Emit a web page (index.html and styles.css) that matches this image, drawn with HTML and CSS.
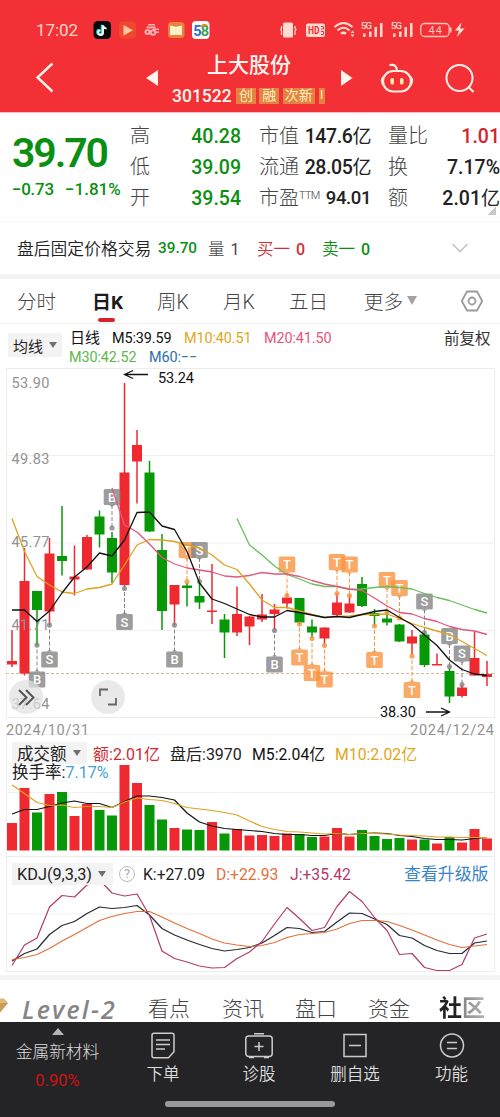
FILE: index.html
```html
<!DOCTYPE html>
<html lang="zh-CN">
<head>
<meta charset="utf-8">
<title>上大股份 301522</title>
<link rel="stylesheet" href="styles.css">
</head>
<body>
<div class="app">
  <header class="header">
    <div class="status">
      <span class="clock">17:02</span>
      <svg class="apps" width="118" height="20" viewBox="0 0 118 20">
        <rect x="0.5" y="1" width="17.5" height="18" rx="4.5" fill="#080808"/>
        <path d="M9.5 5v7.3a2.3 2.3 0 1 1-2.3-2.3M9.5 5c.3 2 1.5 3 3.6 3.2" transform="translate(-.7 -.2)" fill="none" stroke="#27e6e2" stroke-width="2"/>
        <path d="M9.5 5v7.3a2.3 2.3 0 1 1-2.3-2.3M9.5 5c.3 2 1.5 3 3.6 3.2" transform="translate(.5 .4)" fill="none" stroke="#fff" stroke-width="1.9"/>
        <rect x="26" y="1.500" width="17" height="17" rx="4" fill="#f0482c"/>
        <path d="M30.500 5v10.500l9.500-5.300z" fill="#ffc6a0"/>
        <g fill="#ffb3b3"><rect x="55" y="4" width="7" height="1.500"/><rect x="53.500" y="6.500" width="9" height="1.800"/><circle cx="54.500" cy="12" r="3"/><circle cx="60" cy="12.500" r="3.300"/><rect x="60" y="8.500" width="6" height="1.500"/><rect x="62" y="11.500" width="4" height="1.500"/></g>
        <g fill="#f23036"><circle cx="54.500" cy="12" r="1"/><circle cx="60" cy="12.500" r="1.200"/></g>
        <rect x="75" y="2" width="16.500" height="16" rx="3.500" fill="#e8823e"/>
        <path d="M77 5.500l6 1.200 6-1.200v9.800l-6-.6-6 .6z" fill="#fff2c8"/>
        <rect x="99" y="1" width="17.500" height="18" rx="4" fill="#fff"/>
        <text x="100.300" y="15.500" class="logo58" fill="#2f6fce">5</text>
        <text x="107.800" y="15.500" class="logo58" fill="#39a44c">8</text>
        <path d="M108.500 7a3 3 0 0 1 5.500-1" fill="none" stroke="#f08a24" stroke-width="1.800"/>
      </svg>
      <svg class="signals" width="188" height="20" viewBox="280 20 188 20">
        <g fill="#ffdcd0"><rect x="283" y="22.500" width="10" height="15" rx="1.500"/></g>
        <path d="M281.500 26v2.500l-1 1 1 1.500v4M295 26v2.500l1 1-1 1.500v4" fill="none" stroke="#ffdcd0" stroke-width="1.200"/>
        <rect x="306" y="23.500" width="19" height="13.500" rx="2" fill="#ffdcd0"/>
        <text x="308" y="34" class="hd" textLength="11.500" lengthAdjust="spacingAndGlyphs">HD</text>
        <path d="M321 26.500h2.500v2.500h-2.500M321 31.500h2.500v3h-2.500" fill="none" stroke="#f23036"/>
        <g fill="none" stroke="#ffdcd0" stroke-width="2"><path d="M334.500 27q9-8 18 0M337.500 30.500q6-5.500 12 0"/><path d="M341 33.800q2.500-2 5 0" stroke-width="2.500"/></g>
        <path d="M350.500 33l2-2.500 2 2.500zM350.500 34.500l2 2.500 2-2.500z" fill="#ffdcd0"/>
        <g fill="#ffdcd0"><text x="361" y="29" class="g5" textLength="11">5G</text><rect x="363" y="33.500" width="2.500" height="3.500"/><rect x="369" y="31.500" width="2.500" height="5.500"/><rect x="374.500" y="27" width="2.500" height="10"/><rect x="380" y="23" width="2.500" height="14"/></g>
        <g fill="#ffdcd0" transform="translate(30 0)"><text x="361" y="29" class="g5" textLength="11">5G</text><rect x="363" y="33.500" width="2.500" height="3.500"/><rect x="369" y="31.500" width="2.500" height="5.500"/><rect x="374.500" y="27" width="2.500" height="10"/><rect x="380" y="23" width="2.500" height="14"/></g>
        <rect x="420.700" y="23.500" width="28.500" height="13" rx="4" fill="none" stroke="#ffc4bb" stroke-width="1.300"/><rect x="450" y="27.500" width="1.500" height="5" fill="#ffc4bb"/>
        <text x="428.500" y="34" class="bat" textLength="13.500">44</text>
        <path d="M461.500 22.500l-6.500 8h4l-2 6.500 7.500-8.500h-4.500z" fill="#ffe3da"/>
      </svg>
    </div>
    <div class="nav">
      <svg class="back" width="20" height="32" viewBox="0 0 20 32"><path d="M17.500 2.500L2.500 16.500l15 14" fill="none" stroke="#fff3ea" stroke-width="2.400"/></svg>
      <svg class="prev" width="12" height="18" viewBox="0 0 12 18"><path d="M12 1v16L0 9z" fill="#fff5ee"/></svg>
      <div class="title">
        <div class="name">上大股份</div>
        <div class="codeline"><span class="code">301522</span><span class="tag">创</span><span class="tag">融</span><span class="tag wide">次新</span><span class="tag cut">I</span></div>
      </div>
      <svg class="next" width="12" height="18" viewBox="0 0 12 18"><path d="M0 1v16l11.500-8z" fill="#fff5ee"/></svg>
      <svg class="robot" width="34" height="32" viewBox="0 0 34 32" fill="none" stroke="#fff0df" stroke-width="2.200"><rect x="3" y="9" width="28" height="20.500" rx="10.200"/><path d="M3.500 15q-3 4 0 8M30.500 15q3 4 0 8M9.500 3.200q7-2 7.500 5.500"/><g fill="#fff0b0" stroke="none"><rect x="10.500" y="16" width="3.500" height="6.500" rx="1.600"/><rect x="20" y="16" width="3.500" height="6.500" rx="1.600"/></g></svg>
      <svg class="search" width="32" height="32" viewBox="0 0 32 32" fill="none" stroke="#fff0ea" stroke-width="2"><circle cx="14.500" cy="15" r="13"/><path d="M23.500 24l5 5"/></svg>
    </div>
  </header>

  <section class="quote">
    <div class="price">
      <div class="last">39.70</div>
      <div class="chg"><span class="abs">−0.73</span><span class="pct">−1.81%</span></div>
    </div>
    <dl class="grid g1"><dt>高</dt><dd>40.28</dd><dt>低</dt><dd>39.09</dd><dt>开</dt><dd>39.54</dd></dl>
    <dl class="grid g2"><dt>市值</dt><dd>147.6<i>亿</i></dd><dt>流通</dt><dd>28.05<i>亿</i></dd><dt>市盈<sup>TTM</sup></dt><dd class="pe">94.01</dd></dl>
    <dl class="grid g3"><dt>量比</dt><dd class="red">1.01</dd><dt>换</dt><dd>7.17%</dd><dt>额</dt><dd>2.01<i>亿</i></dd></dl>
    <span class="corner"></span>
  </section>

  <section class="after">
    <span class="after-name">盘后固定价格交易</span><span class="after-price">39.70</span><span class="after-vol">量 <b>1</b></span><span class="buy">买一 <b>0</b></span><span class="sell">卖一 <b>0</b></span>
    <svg class="chev" width="18" height="12" viewBox="0 0 18 12"><path d="M1.500 2L9 9.500 16.500 2" fill="none" stroke="#c4c4c4" stroke-width="1.600"/></svg>
  </section>

  <div class="band"></div>

  <nav class="tabs">
    <span>分时</span><span class="on">日K</span><span>周K</span><span>月K</span><span>五日</span><span class="more">更多<i class="tri"></i></span>
    <svg width="24" height="24" viewBox="0 0 24 24" fill="none" stroke="#9a9a9a" stroke-width="1.800"><path d="M7 2.500h10L22.200 12 17 21.500H7L1.800 12z" stroke-linejoin="round"/><circle cx="12" cy="12" r="3.500"/></svg>
  </nav>

  <section class="ma">
    <div class="select ma-select">均线<i class="tri"></i></div>
    <div class="ma-values">
      <div class="line1"><span class="w30">日线</span><span class="w60">M5:39.59</span><span class="w68 yellow">M10:40.51</span><span class="pink">M20:41.50</span></div>
      <div class="line2"><span class="w68 lime">M30:42.52</span><span class="blue">M60:−−</span></div>
    </div>
    <span class="adjust">前复权</span>
  </section>

  <section class="panel kline">
    <svg id="kline" width="500" height="367" viewBox="0 368 500 367"></svg>
    <button class="round expand" aria-label="展开"><svg width="34" height="34" viewBox="0 0 34 34" fill="none" stroke="#555" stroke-width="2"><path d="M10 10l7.500 7.500L10 25M17 10l7.500 7.500L17 25"/></svg></button>
    <button class="round full" aria-label="全屏"><svg width="34" height="34" viewBox="0 0 34 34" fill="none" stroke="#666" stroke-width="1.800"><path d="M9 16V9.500h8M25 18v6.500h-8"/></svg></button>
  </section>

  <section class="panel volume">
    <svg id="volume" width="500" height="121" viewBox="0 735 500 121"></svg>
    <div class="legend">
      <span class="select vol-select">成交额<i class="tri"></i></span><span class="amount">额:2.01亿</span><span class="post">盘后:3970</span><span class="v5">M5:2.04亿</span><span class="v10">M10:2.02亿</span>
    </div>
    <div class="turnover">换手率:<span>7.17%</span></div>
  </section>

  <section class="panel kdj">
    <svg id="kdj" width="500" height="119" viewBox="0 856 500 119"></svg>
    <div class="legend">
      <span class="select kdj-select">KDJ(9,3,3)<i class="tri"></i></span><span class="help">?</span><span class="k">K:+27.09</span><span class="d">D:+22.93</span><span class="j">J:+35.42</span><span class="upgrade">查看升级版</span>
    </div>
  </section>

  <div class="band thin"></div>

  <nav class="subtabs">
    <svg class="gem" width="8" height="18" viewBox="0 0 8 18"><path d="M0 1.500h4L8 6 0 16z" fill="#dcb87a"/><path d="M0 6h8L0 15z" fill="#c99c58"/></svg>
    <span class="level">Level-2</span><span>看点</span><span>资讯</span><span>盘口</span><span>资金</span><span class="community">社区</span>
  </nav>

  <footer class="bottom">
    <div class="sector"><i class="up"></i><span>金属新材料</span><b>0.90%</b></div>
    <div class="item"><svg width="28" height="28" viewBox="0 0 28 28"><path d="M5 1.800h18q2 0 2 2v16.500l-5.500 6H5q-2 0-2-2V3.800q0-2 2-2zM7 8.500h14M7 13h14M7 17.500h9" transform="translate(0 -.5)"/></svg><span>下单</span></div>
    <div class="item"><svg width="30" height="28" viewBox="0 0 30 28"><rect x="1.800" y="4" width="26.400" height="20.500" rx="3"/><path d="M10 1.700h10M5 25.500h5M20 25.500h5M15 10v9M10.500 14.500h9"/></svg><span>诊股</span></div>
    <div class="item"><svg width="28" height="28" viewBox="0 0 28 28"><path d="M3 2.500h22v22H3zM8 13.500h12"/></svg><span>删自选</span></div>
    <div class="item"><svg width="28" height="28" viewBox="0 0 28 28"><circle cx="14" cy="13.500" r="11.500"/><path d="M9 10.500h10M9 16.500h10"/></svg><span>功能</span></div>
    <span class="home"></span>
  </footer>
</div>
<script src="charts.js"></script>
</body>
</html>
```
FILE: styles.css
```css
* { box-sizing: border-box; }
body { margin: 0; background: #fff; color: #222; font-family: Roboto, "Noto Sans CJK SC", sans-serif; }
i { font-style: normal; }
b { font-weight: 500; }
svg { display: block; flex: none; }
.app { width: 500px; height: 1117px; overflow: hidden; display: flex; flex-direction: column; }
.app > * { flex: none; }
span { white-space: nowrap; }

/* header */
.header { height: 113px; background: #f23036; color: #fff6ef; border-bottom: 1px solid #fbb; }
.status { height: 50px; padding: 10px 0 0 36px; display: flex; align-items: center; }
.clock { width: 57px; font-size: 17px; color: #ffd5cb; letter-spacing: -.1px; }
.signals { margin-left: 69px; }
.logo58 { font: 700 14.500px Roboto, sans-serif; }
.hd { font: 700 10.500px Roboto, sans-serif; fill: #f23036; }
.g5 { font: 500 9.500px Roboto, sans-serif; }
.bat { font: 400 11px Roboto, sans-serif; fill: #ffc4bb; }
.nav { height: 62px; padding-left: 35px; display: flex; align-items: center; }
.back { margin-top: -8px; }
.prev { margin: -7px 0 0 91px; }
.title { width: 156px; margin: 0 13px 0 14px; }
.name { height: 29px; line-height: 25px; padding-left: 35px; font-size: 21px; font-weight: 500; }
.codeline { height: 28px; display: flex; align-items: center; }
.code { width: 65px; font-size: 17.500px; font-weight: 500; }
.tag { width: 20px; height: 16px; margin-right: 3.500px; background: #e4823f; color: #fff0c0; font-size: 14px; line-height: 15px; text-align: center; }
.tag.wide { width: 33px; }
.tag.cut { width: 6px; overflow: hidden; font-size: 12px; }
.next { margin-top: -7px; }
.robot { margin: -6px 0 0 27px; }
.search { margin: -5px 0 0 31px; }

/* quote */
.quote { height: 109px; padding: 8px 0 0 12px; display: flex; position: relative; border-bottom: 1px solid #f6f6f6; }
.price { width: 118px; color: #0b8f12; }
.last { height: 57px; line-height: 64px; font-size: 41px; font-weight: 600; letter-spacing: -2.100px; }
.chg { height: 24px; line-height: 22px; font-size: 17px; font-weight: 500; display: flex; }
.abs { width: 53px; letter-spacing: -.3px; }
.grid { margin: 0; display: grid; grid-template-columns: 40px 1fr; grid-auto-rows: 31px; line-height: 31px; font-size: 19.500px; }
.grid dt { font-size: 20px; font-weight: 300; color: #444; white-space: nowrap; }
.grid dd { margin: 0; text-align: right; font-weight: 500; white-space: nowrap; }
.grid i { font-size: 19px; font-weight: 400; }
.grid sup { font-size: 11px; line-height: 0; vertical-align: 6px; letter-spacing: -.7px; }
.g1 { width: 111px; color: #0b8f12; }
.g2 { width: 112px; margin-left: 18px; }
.g2 dd { letter-spacing: -.4px; }
.g2 .pe { font-size: 18.500px; }
.g3 { width: 112px; margin-left: 17px; }
.grid .red { color: #d8232a; }
.corner { position: absolute; right: 4px; bottom: 6px; width: 8px; height: 8px; background: linear-gradient(135deg, transparent 50%, #c8c8c8 50%); }

/* after-hours trading */
.after { height: 52px; padding: 0 0 1px 17px; display: flex; align-items: center; font-size: 16.500px; }
.after-name { width: 141px; font-size: 16.800px; font-weight: 350; }
.after-price { width: 50px; font-size: 15.300px; font-weight: 500; color: #0b8f12; }
.after-vol { width: 49px; font-weight: 300; color: #444; }
.after b { margin-left: 2px; font-size: 16px; }
.after-vol b { font-weight: 400; }
.buy { width: 65px; color: #cf3035; font-weight: 350; }
.sell { width: 129px; color: #0b8f12; font-weight: 350; }

.band { height: 5px; background: #f3f3f3; }
.band.thin { background: #f4f4f4; }

/* period tabs */
.tabs { height: 45px; padding: 0 0 1px 17px; display: grid; grid-template-columns: 75px 65px 66px 66px 75px 96px 24px; align-items: center; border-bottom: 1px solid #f3f3f3; font-size: 19.500px; font-weight: 300; color: #444; }
.tabs .on { position: relative; font-weight: 700; font-size: 19px; color: #1b1b1b; }
.on::after { content: ""; position: absolute; left: 6px; bottom: -8px; width: 17px; height: 4px; border-radius: 2px; background: #dc2228; }
.more { display: flex; align-items: center; gap: 4px; }
.tri { display: inline-block; border: 5px solid transparent; border-top: 7px solid #707070; border-bottom: 0; }
.more .tri { border-top: 9px solid #a3a3a3; }

/* moving averages */
.ma { height: 44px; padding-left: 8px; display: flex; }
.select { background: #f3f3f3; color: #222; display: flex; align-items: center; }
.select .tri { border-width: 6px 4.500px 0; }
.ma-select { width: 54px; height: 24px; margin-top: 9px; padding-left: 5px; gap: 6px; font-size: 15px; }
.ma-values { width: 379px; padding: 5px 0 0 7px; font-size: 14.500px; line-height: 19px; color: #111; }
.line1, .line2 { display: flex; height: 19px; }
.line1 span, .line2 span { letter-spacing: -.1px; }
.line1 span:not(.w30), .line2 span { font-weight: 450; font-size: 14.400px; }
.w30 { width: 43px; padding-left: 1px; font-size: 15px; }
.w60 { width: 72px; }
.w68 { width: 80px; }
.yellow, .v10 { color: #dfa616; }
.pink { color: #e8527a; }
.lime { color: #5cb84c; }
.blue { color: #2a6fa6; }
.adjust { margin: 5px 0 0 3px; font-size: 15.500px; line-height: 20px; color: #333; }

/* chart panels */
.panel { position: relative; }
#kline { overflow: visible; }
.round { position: absolute; top: 312px; width: 34px; height: 34px; padding: 0; border: 0; border-radius: 50%; background: rgba(225, 225, 225, .72); }
.expand { left: 9px; }
.full { left: 91px; }
.legend { position: absolute; left: 12px; top: 7px; display: flex; align-items: center; height: 22px; font-size: 15.700px; font-weight: 400; }
.vol-select { width: 75px; height: 22px; padding-left: 5px; gap: 6px; font-size: 16.500px; }
.amount { width: 77px; padding-left: 6px; color: #d22a30; font-size: 16px; }
.post { width: 83px; padding-left: 6px; font-size: 16px; color: #222; }
.v5 { width: 83px; margin-left: 5px; color: #111; font-size: 15.800px; }
.v10 { font-size: 15.800px; }
.turnover { position: absolute; left: 12px; top: 28px; font-size: 16.500px; line-height: 20px; }
.turnover span { color: #459fd6; font-size: 16px; }
.kdj-select { width: 101px; height: 22px; padding-left: 5px; gap: 6px; font-size: 16.300px; }
.help { width: 16px; height: 16px; margin: 0 8px 0 6px; border: 1px solid #bbb; border-radius: 50%; color: #aaa; font-size: 12px; line-height: 14px; text-align: center; }
.k { width: 73px; }
.d { width: 74px; color: #e2713c; }
.j { width: 114px; color: #b33a6c; }
.upgrade { margin-top: -3px; color: #3c84c8; font-size: 16.900px; }
.axis { font: 400 14.500px Roboto, sans-serif; fill: #929292; }
.note { font: 400 14.500px Roboto, sans-serif; fill: #111; }
.mark { font: 500 13px Roboto, sans-serif; fill: #fff; text-anchor: middle; }

/* lower tabs */
.subtabs { height: 42px; display: grid; grid-template-columns: 22px 126px 74px 73px 73px 71px 60px; align-items: center; padding-top: 14px; font-size: 21px; line-height: 26px; font-weight: 300; color: #444; }
.subtabs span { margin-top: 1px; }
.gem { margin-top: -4px; }
.level { font-family: "Open Sans", sans-serif; font-size: 25px; font-style: italic; font-weight: 600; color: #858585; letter-spacing: 2.200px; }
.community { font-size: 23px; font-weight: 700; background: linear-gradient(90deg, #222 36%, #8a8a8a 42%, #bbb 80%); color: transparent; background-clip: text; -webkit-background-clip: text; }

/* bottom bar */
.bottom { height: 95px; background: #242426; color: #ddd; display: grid; grid-template-columns: 115px 96px 96px 96px 97px; position: relative; }
.sector { display: flex; flex-direction: column; align-items: center; padding-top: 6px; font-size: 16.700px; font-weight: 300; }
.up { border: 6px solid transparent; border-bottom: 7px solid #b5b5b5; border-top: 0; margin-bottom: 6px; }
.sector span { line-height: 24px; }
.sector b { margin-top: 5px; line-height: 22px; font-size: 16.500px; font-weight: 400; color: #cf1212; }
.item { display: flex; flex-direction: column; align-items: center; padding-top: 10px; font-size: 16.500px; font-weight: 350; }
.item svg { fill: none; stroke: #ccc; stroke-width: 1.500; }
.item span { line-height: 29px; }
.home { position: absolute; left: 165px; bottom: 10px; width: 170px; height: 6px; border-radius: 3px; background: #999; }
```
FILE: charts.js
```js
const RED = '#ee2a30', GREEN = '#069806', ORANGE = '#fa9440', GREY = '#858585';
const X = i => 12 + 12.5 * i;
const poly = (ys, color, start = 0, w = 1.3) =>
  `<polyline fill="none" stroke="${color}" stroke-width="${w}" stroke-linejoin="round" points="${ys.map((y, i) => X(i + start) + ',' + y).join(' ')}"/>`;
const rule = (y, c = '#f0f0f0') => `<path d="M6 ${y}H494.5" stroke="${c}"/>`;
const frame = (y1, y2) => `<rect x="6.500" y="${y1}" width="488" height="${y2 - y1}" fill="none" stroke="#ececec"/>`;

// colour, wick top, wick bottom, body top, body bottom
const candles = [
  'r 630 667 661 664.5', 'r 548 675.5 581 673.5', 'g 591 645 591 610', 'r 538 625 553.5 611.5', 'g 506 575.5 556 561',
  'r 545.5 595.5 576.5 579.5', 'r 535 570 537 569.5', 'g 510.5 547.5 516.5 534.5', 'g 532 583 538 572.5', 'r 383 587 472.5 585',
  'r 430 503.5 445 461.5', 'g 461 532 472.5 531.5', 'g 534 630 550 611', 'r 585 625 585 604.5', 'g 582 606.5 585.5 588',
  'g 582 609 596 602.5', 'r 564 624 610.5 612', 'g 614 658 619.5 632.5', 'r 586.5 636 614 632.5', 'r 616 645 616.5 626.5',
  'r 594 622 614.5 619.5', 'r 604 630 609.5 614', 'r 594 608.5 597.5 603.5', 'g 598 624 598 622.5', 'g 619.5 638 626.5 632.5',
  'r 627.5 645 627.5 638.5', 'r 593 616 602.5 615', 'r 595 613 603.5 612.5', 'g 577 607 584 606', 'g 609 626 613 616',
  'g 611 625.5 618.5 622.5', 'g 624 642 624.5 641.5', 'r 630 655 636.5 643.5', 'g 631 667 634.5 665', 'r 653.5 665 664 665.5',
  'g 667 703 671 696.5', 'r 685 697.5 687.5 696', 'r 631.5 675.5 658 675.5', 'r 661 686 674 677'
].map(s => s.split(' '));

const m5 = [610, 610, 621.5, 611, 593, 577, 567, 553, 556, 540, 512.5, 512, 526, 529.5, 551.5, 583, 599, 603.5, 609, 614.5, 617, 617, 610.5, 612.5, 615, 617.5, 616.5, 617.5, 614.5, 611.5, 610, 617.5, 624.5, 635, 645.5, 660, 669.5, 674, 675.5];
const m10 = [518.5, 551.5, 576.5, 585, 592, 593.5, 589, 587.5, 584, 565, 545, 539.5, 540, 541.5, 545, 548, 555, 565, 569.5, 584, 600, 607.5, 607.5, 611, 614.5, 617.5, 616.5, 616, 614.5, 614.5, 614, 618.5, 623.5, 627.5, 631, 634.5, 641.5, 648.5, 655.5];
const m20 = [488, 525, 532, 544, 557.5, 564, 568, 570, 572, 576, 577, 575.5, 572.5, 574, 574, 576.5, 580.5, 584, 586.5, 589, 590.5, 598, 606, 612.5, 614, 618.5, 621.5, 626.5, 629.5, 631, 634.5];
const m30 = [518.5, 545, 555, 566, 574.5, 579, 584, 586.5, 586.5, 589.5, 589, 587.5, 586.5, 587.5, 589, 593.5, 597.5, 600.5, 605, 609.5, 613];

// candle index, letter, label centre, anchor dot
const marks = [
  [2, 'B', 679.5, 645], [3, 'S', 659.5, 625], [8, 'B', 497, 528], [9, 'S', 622, 588.5], [13, 'B', 659.5, 625],
  [14, 'T', 550, 581.5], [15, 'S', 550, 581.5], [21, 'B', 664.5, 630.5], [22, 'T', 564.5, 595.5], [23, 'T', 657.5, 624],
  [24, 'T', 673, 638.5], [25, 'T', 679.5, 645.5], [26, 'T', 562, 593.5], [27, 'T', 564.5, 595.5], [29, 'T', 660, 626],
  [30, 'T', 580, 612], [31, 'T', 588, 618], [32, 'T', 690, 656], [33, 'S', 601.5, 632.5], [35, 'B', 636, 666.5], [36, 'S', 653.5, 684.5]
];

function drawMark([i, letter, y, dot]) {
  const c = letter === 'T' ? ORANGE : GREY, x = X(i), up = y < dot, s = up ? 1 : -1;
  return `<path d="M${x} ${y + s * 8}V${dot}" stroke="${c}" stroke-dasharray="4 2"/>
    <circle cx="${x}" cy="${dot}" r="2.600" fill="${c}" opacity=".8"/>
    <g fill="${c}" opacity=".8"><path d="M${x - 6.8} ${y - 8}h13.600q1.500 0 1.500 1.500v13q0 1.500-1.500 1.500h-13.600q-1.500 0-1.500-1.500v-13q0-1.500 1.500-1.500z"/><path d="M${x - 3} ${y + s * 8}h6l-3 ${s * 2}z"/></g>
    <text class="mark" x="${x}" y="${y + 4.600}">${letter}</text>`;
}

let k = frame(368.5, 717.5) + rule(455.5) + rule(543) + rule(630.5) + rule(734.5);
k += `<path d="M6 673.500H494" stroke="#d3b99a" stroke-dasharray="3 2"/>`;
k += candles.map(([c, a, b, t, u], i) => {
  const f = c === 'r' ? RED : GREEN;
  return `<path d="M${X(i)} ${a}V${b}" stroke="${f}" stroke-width="1.500"/><rect x="${X(i) - 5}" y="${t}" width="10" height="${u - t}" fill="${f}"/>`;
}).join('');
k += marks.map(drawMark).join('');
k += [['53.90', 388], ['49.83', 463.5], ['45.77', 547], ['41.71', 629.5], ['37.64', 709]].map(([t, y]) =>
  `<text class="axis" x="11.500" y="${y}" textLength="38">${t}</text>`).join('');
k += poly(m30, '#69bf5c', 18) + poly(m20, '#e2587c', 8) + poly(m10, '#dfa21f') + poly(m5, '#111');
k += `<path d="M148 374.500H125M133 370.500l-8.500 4 8.500 4" fill="none" stroke="#111" stroke-width="1.300"/>
  <text class="note" x="158" y="383" textLength="36">53.24</text>
  <path d="M426 712H449M441 708l8.500 4-8.500 4" fill="none" stroke="#111" stroke-width="1.300"/>
  <text class="note" x="380" y="716.500" textLength="36">38.30</text>
  <text class="axis" x="6" y="735" textLength="83">2024/10/31</text>
  <text class="axis" x="410" y="735" textLength="84">2024/12/24</text>`;
document.getElementById('kline').innerHTML = k;

const volumes = 'r823 r788 g812.5 r794 g792 r816 r804 g810 g815.5 r765 r783 g805 g819.5 r828 g829.5 g830 r822 g833.5 r829 r835.5 r835 r836 r833.5 g834 g837 r836.5 r828 r836.5 g830 g836 g839 g838 r839.5 g839.5 r843.5 g837 r842.5 r829 r838.5'.split(' ');
const v5 = [814, 809.5, 809.5, 806.5, 803, 801, 803.5, 803.5, 807.5, 801.5, 796, 796, 797.5, 800, 813, 822, 826, 828.5, 829.5, 830.5, 831.5, 833.5, 834.5, 834.5, 835.5, 835.5, 833.5, 834.5, 833.5, 833, 833.5, 835.5, 836.5, 838.5, 839.5, 839.5, 840, 838.5, 837.5];
const v10 = [785, 793.5, 802.5, 805.5, 805, 807.5, 806.5, 806.5, 807.5, 802, 798, 799.5, 800.5, 803.5, 807.5, 809, 810.5, 812.5, 815, 821, 826.5, 829.5, 831.5, 832, 833, 834, 833.5, 834.5, 833.5, 833.5, 834, 835, 835.5, 836, 837, 837, 837.5, 837.5, 837.5];
document.getElementById('volume').innerHTML =
  `<path d="M6.500 735V856M494.500 735V856" stroke="#ececec"/>` + rule(792.5) +
  volumes.map((v, i) => `<rect x="${X(i) - 5}" y="${v.slice(1)}" width="10" height="${850.5 - v.slice(1)}" fill="${v[0] === 'r' ? RED : GREEN}"/>`).join('') +
  poly(v5, '#111', 0, 1.200) + poly(v10, '#dfa21f', 0, 1.200);

const kk = [961, 953.5, 949, 934.5, 925.5, 921.5, 913.5, 907, 908.5, 907.5, 905.5, 915, 928.5, 935, 940, 944.5, 948.5, 951, 949.5, 947.5, 943, 935.5, 927.5, 928.5, 932.5, 931.5, 922, 913, 913.5, 919, 924.5, 935.5, 938, 945.5, 950.5, 953.5, 953.5, 943, 941];
const dd = [959.5, 957.5, 954.5, 948.5, 941, 934.5, 927.5, 920.5, 916.5, 913.5, 911.5, 911.5, 917, 923, 928.5, 933.5, 939, 943, 945, 946.5, 945.5, 942.5, 937.5, 934.5, 933.5, 932.5, 929, 923.5, 920.5, 920.5, 921.5, 925.5, 930, 935, 940, 944.5, 947.5, 946, 944.5];
const jj = [965.5, 945, 938, 907, 895.5, 897, 885, 880, 893, 896, 894, 915.5, 951, 958.5, 962, 966, 968, 967.5, 958.5, 952, 941.5, 924, 907.5, 918.5, 930.5, 927.5, 906.5, 891.5, 901.5, 917.5, 930.5, 954.5, 953.5, 967.5, 970.5, 970.5, 964.5, 938, 934];
document.getElementById('kdj').innerHTML = frame(856.5, 971.5) + rule(914) +
  poly(kk, '#222a33', 0, 1.200) + poly(dd, '#e2713c', 0, 1.200) + poly(jj, '#b33a6c', 0, 1.200);
```
